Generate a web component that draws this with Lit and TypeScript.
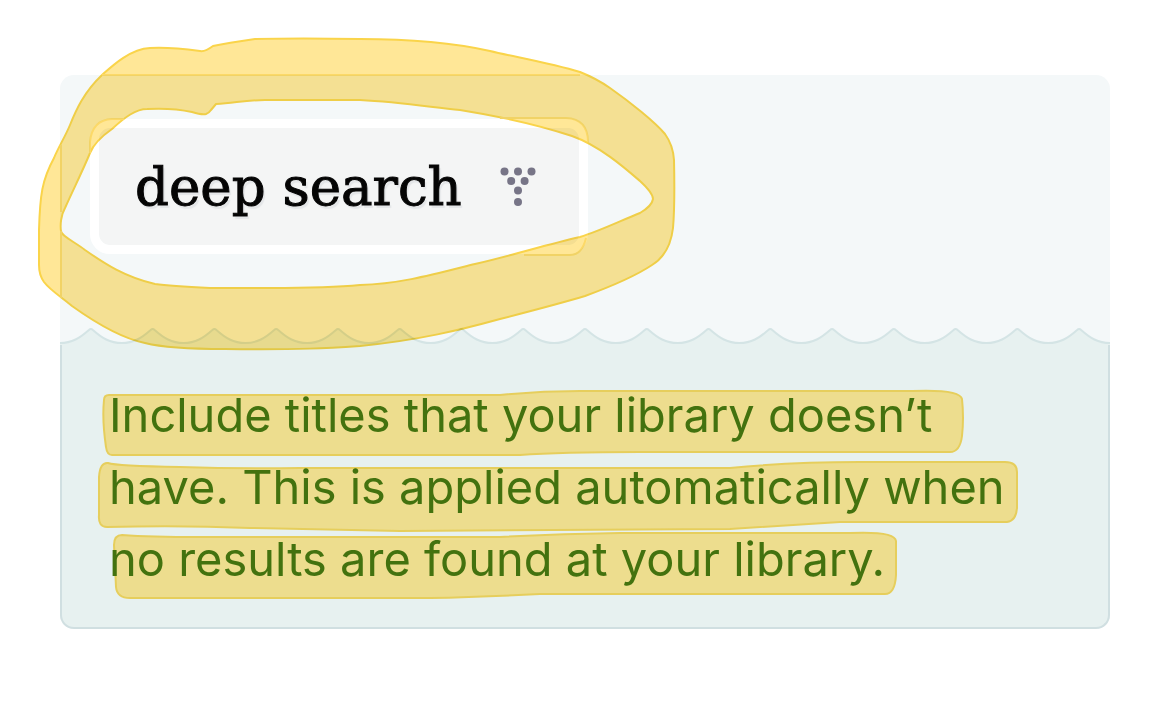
import { LitElement, html, svg, css } from "lit";
import { customElement } from "lit/decorators.js";

const WAVES = 17;
const WAVE_WIDTH = 62;

const crest = Array.from({ length: WAVES }, () => "c 12 0 20 -5 29 -13 q 2 -2 4 0 c 9 8 17 13 29 13").join(" ");

@customElement("wave-divider")
class WaveDivider extends LitElement {
  static styles = css`
    :host {
      display: block;
      height: 18px;
    }
    .waves {
      display: block;
      width: 100%;
      height: 18px;
    }
    .water {
      fill: #e7f1f0;
    }
    .line {
      fill: none;
      stroke: #d4e4e5;
      stroke-width: 2;
    }
  `;

  render() {
    const width = WAVES * WAVE_WIDTH;
    return html`
      <svg class="waves" viewBox="0 0 ${width} 18" preserveAspectRatio="none" aria-hidden="true">
        ${svg`
          <path class="water" d="M0 16 ${crest} V18 H0 Z"></path>
          <path class="line" d="M0 16 ${crest}"></path>
        `}
      </svg>
    `;
  }
}

@customElement("app-root")
class AppRoot extends LitElement {
  static styles = css`
    :host {
      display: block;
      box-sizing: border-box;
      min-height: 100vh;
      padding: 75px 60px;
      background: #fff;
    }
    .card {
      border-radius: 14px;
      background: #f4f8f9;
    }
    .top {
      position: relative;
      padding: 44px 30px 73px;
    }
    .deep-search {
      display: inline-flex;
      align-items: center;
      gap: 38px;
      height: 135px;
      padding: 0 43px 0 36px;
      border: 9px solid #fff;
      border-radius: 20px;
      background: #f4f5f5;
      background-clip: padding-box;
      color: #050505;
      font-family: "DejaVu Serif", serif;
      font-size: 53px;
      line-height: 64px;
      -webkit-text-stroke: 1px #050505;
      text-shadow: 2px 3px 1px #e4e6e8;
      vertical-align: top;
      cursor: pointer;
    }
    .dots {
      width: 36px;
      height: 40px;
      fill: #777587;
    }
    .bottom {
      position: relative;
      padding: 34px 47px 32px;
      border: solid #d0dfe1;
      border-width: 0 2px 2px;
      border-radius: 0 0 14px 14px;
      background: #e7f1f0;
    }
    .note {
      position: relative;
      margin: 0;
      color: #43720f;
      font-family: Inter, sans-serif;
      font-size: 47px;
      line-height: 72px;
    }
    .ring,
    .marks {
      position: absolute;
      left: 0;
      top: 0;
      overflow: visible;
      pointer-events: none;
    }
    .ring {
      z-index: 1;
      mix-blend-mode: multiply;
    }
    .ring-ink {
      fill: #ffe797;
      fill-rule: evenodd;
      stroke: #fad44a;
      stroke-width: 2;
      stroke-linejoin: round;
    }
    .seam {
      fill: none;
      stroke: #fcd968;
      stroke-width: 2;
    }
    .mark-ink {
      fill: #eddd8e;
      stroke: #e6ce5c;
      stroke-width: 2;
      stroke-linejoin: round;
    }
  `;

  render() {
    return html`
      <section class="card">
        <div class="top">
          <button class="deep-search" type="button">
            <span>deep search</span>
            <svg class="dots" viewBox="0 0 36 40" aria-hidden="true">
              <circle cx="4.500" cy="4.500" r="4"></circle>
              <circle cx="18" cy="4.500" r="4"></circle>
              <circle cx="31.500" cy="4.500" r="4"></circle>
              <circle cx="11.200" cy="14" r="4"></circle>
              <circle cx="24.600" cy="14" r="4"></circle>
              <circle cx="18" cy="23.500" r="4"></circle>
              <circle cx="18" cy="35" r="4"></circle>
            </svg>
          </button>
          <svg class="ring" width="620" height="280" viewBox="60 75 620 280" aria-hidden="true">
            <path
              class="ring-ink"
              d="M213 46 Q205 52 200 51 C185 49 165 47 150 48 C130 49 112 66 102 75 C84 92 76 110 70 125 C65 137 58 148 54 158 C42 180 40 195 39 230 V265 Q39 275 44 282 C50 290 60 296 72 306 C100 326 125 339 145 343 C165 348 200 349 225 349 C300 350 330 348 360 346 C420 340 460 330 500 319 C535 310 565 302 585 296 C615 285 640 273 652 265 C665 257 671 245 673 228 Q675 205 674 160 Q673 145 665 134 C655 122 630 102 610 88 C600 81 590 76 580 72 C550 63 515 57 490 51 C450 42 400 39 360 39 Q300 38 255 39 C235 42 218 45 213 46 Z
                 M216 104 C235 103 245 100 265 100 H360 C400 102 430 107 460 110 C510 118 545 127 572 136 C600 146 625 168 640 181 Q653 193 653 199 Q652 206 640 213 C620 221 600 231 580 237 C545 245 510 256 475 264 C435 274 400 284 360 285 C330 288 300 288 270 288 H210 C190 287 170 286 155 284 C125 277 105 264 85 250 C75 242 61 236 61 231 C60 225 61 215 65 208 C74 188 83 170 90 153 C94 143 102 136 112 129 C125 117 136 109 147 109 C165 108 183 110 192 112 Q202 115 206 114 Q209 113 211 110 Z"
            ></path>
            <path class="seam" d="M102 75 H580 M61 145 V212 M61 231 V298"></path>
            <path class="seam" d="M90 153 V142 Q92 120 112 119 H124 M500 118 H566 Q588 119 588 142 M524 255 H570 Q582 255 586 238"></path>
          </svg>
        </div>
        <wave-divider></wave-divider>
        <div class="bottom">
          <svg class="marks" width="960" height="260" viewBox="62 345 960 260" aria-hidden="true">
            <path
              class="mark-ink"
              d="M109 395 Q300 395 500 395 Q540 391 580 391 H912 Q960 389 962 399 Q964 418 962 436 Q960 452 950 452 H640 Q560 452 520 455 H112 Q107 455 106 447 Q102 420 104 400 Q104 395 109 395 Z"
            ></path>
            <path
              class="mark-ink"
              d="M108 463 Q116 466 180 467 Q240 469 300 468 H730 Q790 462 860 462 H1005 Q1017 462 1017 472 V508 Q1016 521 1007 522 H840 Q780 526 730 529 Q600 530 400 531 Q300 529 250 528 Q180 525 107 527 Q98 527 99 515 V477 Q100 462 108 463 Z"
            ></path>
            <path
              class="mark-ink"
              d="M122 535 Q150 537 200 537 H500 Q560 534 620 533 H850 Q895 531 896 541 V575 Q895 594 885 594 H540 Q480 597 430 598 H130 Q117 598 116 587 L114 545 Q114 535 122 535 Z"
            ></path>
          </svg>
          <p class="note">
            Include titles that your library doesn’t have. This is applied automatically when no results are found at
            your library.
          </p>
        </div>
      </section>
    `;
  }
}
